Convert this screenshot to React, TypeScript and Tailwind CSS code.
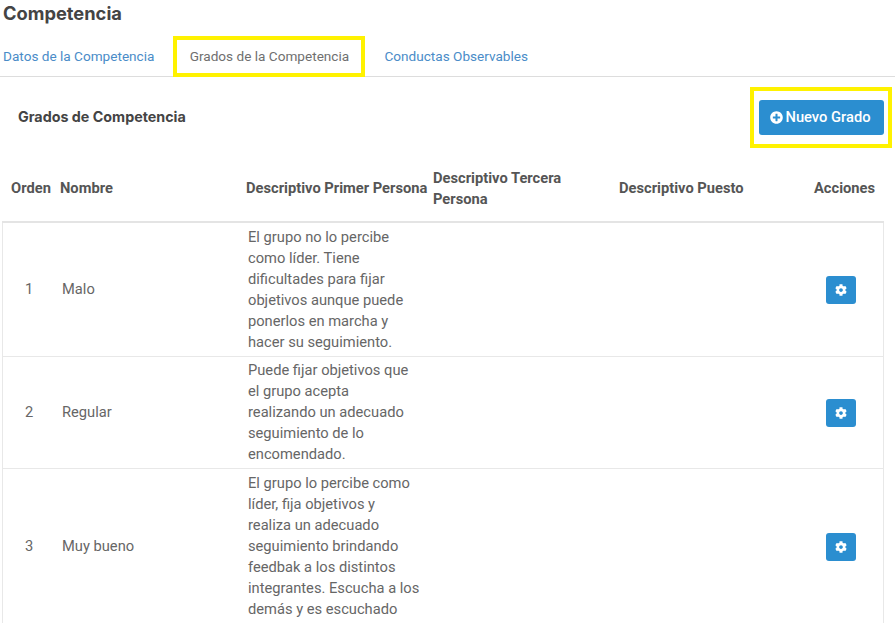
import { FaCog, FaPlusCircle } from "react-icons/fa";

const rows = [
  {
    n: 1,
    name: "Malo",
    h: "h-[134px]",
    lines: ["El grupo no lo percibe", "como líder. Tiene", "dificultades para fijar", "objetivos aunque puede", "ponerlos en marcha y", "hacer su seguimiento."],
  },
  {
    n: 2,
    name: "Regular",
    h: "h-[112px]",
    lines: ["Puede fijar objetivos que", "el grupo acepta", "realizando un adecuado", "seguimiento de lo", "encomendado."],
  },
  {
    n: 3,
    name: "Muy bueno",
    h: "h-[156px]",
    lines: ["El grupo lo percibe como", "líder, fija objetivos y", "realiza un adecuado", "seguimiento brindando", "feedbak a los distintos", "integrantes. Escucha a los", "demás y es escuchado"],
  },
];

export default function App() {
  return (
    <div className="h-[623px] w-[895px] overflow-hidden bg-white font-['Roboto',sans-serif] text-[14.7px] text-[#666]">
      <h1 className="pl-[3px] pt-[3px] font-['Inter',sans-serif] text-[18.3px] leading-[21px] font-bold text-[#444]">Competencia</h1>

      <div className="mt-[12px] flex h-[41px] items-stretch border-b border-[#ddd] pl-[3px] text-[13.6px]">
        <a className="mr-[19px] flex items-center text-[#4a8cc8]">Datos de la Competencia</a>
        <a className="flex h-[41px] w-[192px] items-center justify-center border-4 border-[#fff200] bg-white text-[#6f6f6f]">Grados de la Competencia</a>
        <a className="ml-[19px] flex items-center text-[#4a8cc8]">Conductas Observables</a>
      </div>

      <div className="flex h-[71px] items-center justify-between pl-[18px] pr-[3px] pt-[10px]">
        <h2 className="-mt-[2px] font-['Inter',sans-serif] text-[14.3px] font-bold text-[#444]">Grados de Competencia</h2>
        <div className="flex h-[61px] w-[142px] items-center justify-center border-4 border-[#fff200]">
          <button className="flex h-[35px] w-[125px] items-center justify-center gap-[3px] rounded-[3px] bg-[#2b8ed0] pr-[2px] font-medium text-white">
            <FaPlusCircle className="size-[13px]" />
            Nuevo Grado
          </button>
        </div>
      </div>

      <div className="ml-[2px] mr-[11px] grid h-[75px] grid-cols-[58px_186px_187px_186px_1fr_70px] items-center border-b-2 border-[#e4e4e4] pt-[8px] font-bold leading-[21px] text-[#555]">
        <div className="text-center">Orden</div>
        <div>Nombre</div>
        <div className="whitespace-nowrap">Descriptivo Primer Persona</div>
        <div className="pr-[30px]">Descriptivo Tercera Persona</div>
        <div>Descriptivo Puesto</div>
        <div>Acciones</div>
      </div>

      <div className="ml-[2px] mr-[11px] border-x border-[#e8e8e8]">
        {rows.map((r) => (
          <div key={r.n} className={`grid ${r.h} grid-cols-[57px_186px_580px_1fr] items-center border-b border-[#e8e8e8] leading-[21px] text-[#666]`}>
            <div className="pl-[22px]">{r.n}</div>
            <div className="pl-[2px]">{r.name}</div>
            <div className="pl-[2px]">
              {r.lines.map((l) => (
                <div key={l} className="whitespace-nowrap">{l}</div>
              ))}
            </div>
            <div className="flex">
              <button className="flex h-[28px] w-[30px] items-center justify-center rounded-[3px] bg-[#2b8ed0] text-white">
                <FaCog className="size-[12px]" />
              </button>
            </div>
          </div>
        ))}
      </div>
    </div>
  );
}
